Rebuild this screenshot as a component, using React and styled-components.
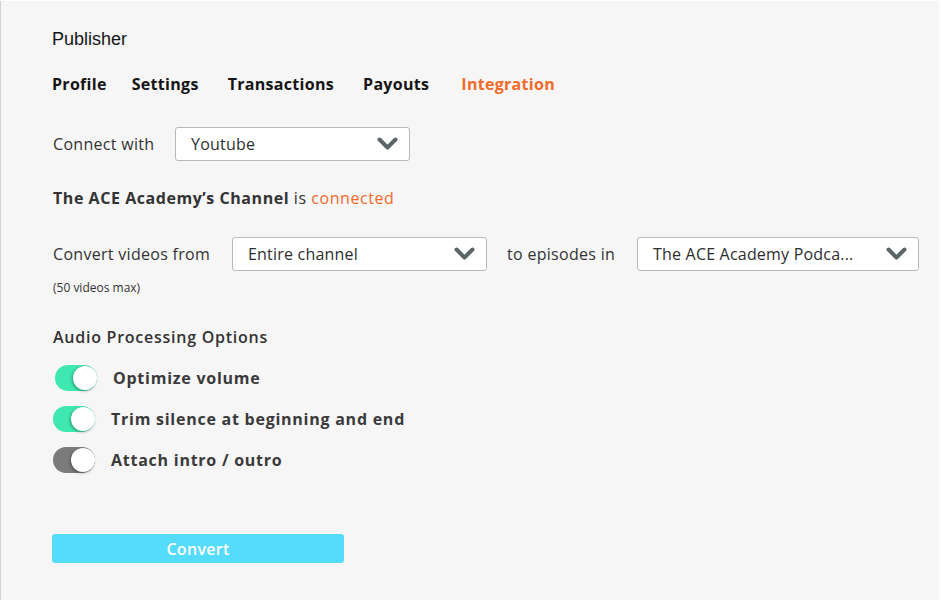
import React from 'react';
import styled, { createGlobalStyle } from 'styled-components';

const GlobalStyle = createGlobalStyle`
  html, body {
    margin: 0;
    padding: 0;
    background: #ffffff;
  }
  * {
    box-sizing: border-box;
  }
`;

const Chevron = () => (
  <svg width="21" height="14" viewBox="0 0 21 14">
    <polyline
      points="2.5,2.5 10.5,10.5 18.5,2.5"
      fill="none"
      stroke="#5c6668"
      strokeWidth="4"
      strokeLinecap="round"
      strokeLinejoin="round"
    />
  </svg>
);

const Dropdown = ({ value, width }) => (
  <Select width={width}>
    <SelectValue>{value}</SelectValue>
    <Chevron />
  </Select>
);

const options = [
  { label: 'Optimize volume', on: true, nudge: 2 },
  { label: 'Trim silence at beginning and end', on: true, nudge: 0 },
  { label: 'Attach intro / outro', on: false, nudge: 0 },
];

const tabs = [
  { label: 'Profile', space: 25 },
  { label: 'Settings', space: 29 },
  { label: 'Transactions', space: 29 },
  { label: 'Payouts', space: 32 },
  { label: 'Integration', space: 0 },
];

const App = () => {
  return (
    <>
      <GlobalStyle />
      <Panel>
        <Title>Publisher</Title>
        <Tabs>
          {tabs.map((tab) => (
            <Tab key={tab.label} space={tab.space} active={tab.label === 'Integration'}>
              {tab.label}
            </Tab>
          ))}
        </Tabs>

        <ConnectRow>
          <Label width={122}>Connect with</Label>
          <Dropdown value="Youtube" width={235} />
        </ConnectRow>

        <Status>
          <strong>The ACE Academy’s Channel</strong> is <Accent>connected</Accent>
        </Status>

        <ConvertRow>
          <Label width={159}>Convert videos from</Label>
          <Dropdown value="Entire channel" width={255} />
          <Label width={110}>to episodes in</Label>
          <Dropdown value="The ACE Academy Podca..." width={282} />
        </ConvertRow>
        <Hint>(50 videos max)</Hint>

        <SectionTitle>Audio Processing Options</SectionTitle>
        <Options>
          {options.map((opt) => (
            <Option key={opt.label} nudge={opt.nudge}>
              <Toggle on={opt.on}>
                <Knob />
              </Toggle>
              <OptionLabel>{opt.label}</OptionLabel>
            </Option>
          ))}
        </Options>

        <ConvertButton>Convert</ConvertButton>
      </Panel>
    </>
  );
};

export default App;

const Panel = styled.div`
  width: 939px;
  height: 599px;
  margin-top: 1px;
  background: #f6f6f6;
  border-left: 1px solid #d2d2d2;
  padding: 28px 0 0 51px;
  font-family: "Open Sans", sans-serif;
  color: #333333;
`;

const Title = styled.div`
  font-family: "Liberation Sans", Arial, sans-serif;
  font-size: 18px;
  line-height: 20px;
  color: #151515;
`;

const Tabs = styled.div`
  display: flex;
  margin-top: 25px;
`;

const Tab = styled.div`
  margin-right: ${(p) => p.space}px;
  font-size: 16px;
  font-weight: 700;
  line-height: 20px;
  letter-spacing: 0.3px;
  color: ${(p) => (p.active ? '#f26a2a' : '#151515')};
`;

const Label = styled.div`
  flex: none;
  width: ${(p) => (p.width ? `${p.width}px` : 'auto')};
  font-size: 16px;
  line-height: 20px;
  letter-spacing: 0.3px;
  white-space: nowrap;
  color: #333333;
`;

const ConnectRow = styled.div`
  display: flex;
  align-items: center;
  margin-top: 33px;
  padding-left: 1px;
`;

const Select = styled.div`
  flex: none;
  width: ${(p) => p.width}px;
  height: 34px;
  display: flex;
  align-items: center;
  justify-content: space-between;
  padding: 0 11px 0 15px;
  background: #ffffff;
  border: 1px solid #b9b9b9;
  border-radius: 3px;
`;

const SelectValue = styled.span`
  font-size: 16px;
  letter-spacing: 0.2px;
  color: #2e2e2e;
  white-space: nowrap;
`;

const Status = styled.div`
  margin-top: 27px;
  padding-left: 1px;
  font-size: 16px;
  line-height: 20px;
  letter-spacing: 0.55px;

  strong {
    font-weight: 700;
  }
`;

const Accent = styled.span`
  color: #f26a2a;
`;

const ConvertRow = styled.div`
  display: flex;
  align-items: center;
  gap: 20px;
  margin-top: 29px;
  padding-left: 1px;
`;

const Hint = styled.div`
  margin-top: 10px;
  padding-left: 1px;
  font-size: 12px;
  line-height: 14px;
  color: #333333;
`;

const SectionTitle = styled.div`
  margin-top: 32px;
  padding-left: 1px;
  font-size: 16px;
  font-weight: 600;
  line-height: 20px;
  letter-spacing: 0.75px;
`;

const Options = styled.div`
  display: flex;
  flex-direction: column;
  gap: 15px;
  margin-top: 18px;
  padding-left: 1px;
`;

const Option = styled.div`
  display: flex;
  align-items: center;
  gap: 16px;
  padding-left: ${(p) => p.nudge}px;
`;

const Toggle = styled.div`
  position: relative;
  flex: none;
  width: 42px;
  height: 26px;
  border-radius: 13px;
  background: ${(p) => (p.on ? '#3ee8b0' : '#7b7b7b')};
`;

const Knob = styled.div`
  position: absolute;
  top: 1px;
  right: 0;
  width: 24px;
  height: 24px;
  border-radius: 50%;
  background: #ffffff;
  box-shadow: -1px 1px 3px rgba(0, 0, 0, 0.35);
`;

const OptionLabel = styled.div`
  font-size: 16px;
  font-weight: 700;
  line-height: 20px;
  letter-spacing: 0.75px;
  color: #3a3a3a;
`;

const ConvertButton = styled.button`
  display: block;
  width: 292px;
  height: 29px;
  margin-top: 61px;
  border: none;
  border-radius: 3px;
  background: #55dcfb;
  color: #ffffff;
  font-family: "Open Sans", sans-serif;
  font-size: 16px;
  font-weight: 600;
  letter-spacing: 0.3px;
  padding: 0;
`;
